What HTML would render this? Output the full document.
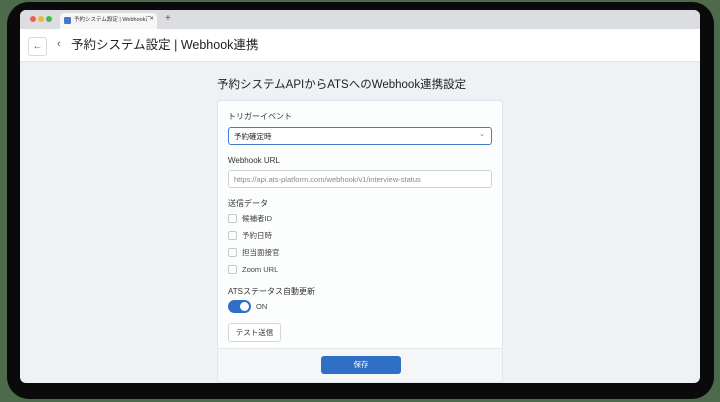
<!DOCTYPE html>
<html><head><meta charset="utf-8"><style>
*{box-sizing:border-box;margin:0;padding:0}
body{width:720px;height:402px;background:#4d6b4a;position:relative;overflow:hidden;font-family:"Liberation Sans","Noto Sans CJK JP",sans-serif;color:#222;line-height:1}
.frame{position:absolute;left:7px;top:2px;width:707px;height:397px;background:#0a0a0a;border-radius:22px}
.screen{position:absolute;left:20px;top:10px;width:680px;height:373px;background:#eef2f5;border-radius:6px;overflow:hidden}
.tabbar{position:absolute;left:0;top:0;width:680px;height:19px;background:#dcdde1}
.dot{position:absolute;top:6px;width:6px;height:6px;border-radius:50%}
.tab{position:absolute;left:40px;top:3px;width:97px;height:16px;background:#f6f6f7;border-radius:4px 4px 0 0;font-size:5.5px;color:#333;padding:5px 0 0 14px;white-space:nowrap;overflow:hidden}
.tab i{position:absolute;left:4px;top:4px;width:7px;height:7px;background:#4a78c8;border-radius:1px}
.hdr{position:absolute;left:0;top:19px;width:680px;height:33px;background:#fff;border-bottom:1px solid #e4e6ea}
.card{position:absolute;left:197px;top:90px;width:286px;height:283px;background:#fcfdfd;border:1px solid #e3e6ea;border-radius:4px;overflow:hidden}
.lbl{position:absolute;left:10px;font-size:8px;color:#333}
.inp{position:absolute;left:10px;width:264px;height:18px;border:1px solid #cfd3d8;border-radius:3px;background:#fff;font-size:7.5px;padding:5px 0 0 5px}
.cb{position:absolute;left:10px;width:9px;height:9px;border:1px solid #c4c8cd;border-radius:2px;background:#fff}
.ct{position:absolute;left:24px;font-size:7.5px;color:#444}
</style></head><body>
<div class="frame"></div>
<div class="screen">
 <div class="tabbar">
  <div class="dot" style="left:10px;background:#ec5f57"></div>
  <div class="dot" style="left:18px;background:#f1b93a"></div>
  <div class="dot" style="left:26px;background:#45b94a"></div>
  <div class="tab"><i></i>予約システム設定 | Webhook連<span style="position:absolute;right:3px;top:4px;background:#f6f6f7;padding-left:2px">✕</span></div>
  <div style="position:absolute;left:145px;top:4px;font-size:10px;color:#555">+</div>
 </div>
 <div class="hdr">
  <div style="position:absolute;left:8px;top:8px;width:19px;height:19px;border:1px solid #d6d9dd;border-radius:3px;font-size:10px;color:#555;text-align:center;line-height:17px">←</div>
  <div style="position:absolute;left:37px;top:10px;font-size:11px;color:#555">‹</div>
  <div style="position:absolute;left:51px;top:10px;font-size:12.5px;color:#222">予約システム設定 | Webhook連携</div>
 </div>
 <div style="position:absolute;left:197px;top:70px;font-size:11.5px;color:#222">予約システムAPIからATSへのWebhook連携設定</div>
 <div class="card">
  <div class="lbl" style="top:12px">トリガーイベント</div>
  <div class="inp" style="top:26px;border:1.5px solid #3f7bd0;color:#222">予約確定時<span style="position:absolute;right:6px;top:3px;color:#777;font-size:7px">⌄</span></div>
  <div class="lbl" style="top:56px">Webhook URL</div>
  <div class="inp" style="top:69px;color:#888">https://api.ats-platform.com/webhook/v1/interview-status</div>
  <div class="lbl" style="top:99px">送信データ</div>
  <div class="cb" style="top:113px"></div><div class="ct" style="top:114px">候補者ID</div>
  <div class="cb" style="top:130px"></div><div class="ct" style="top:131px">予約日時</div>
  <div class="cb" style="top:147px"></div><div class="ct" style="top:148px">担当面接官</div>
  <div class="cb" style="top:164px"></div><div class="ct" style="top:165px">Zoom URL</div>
  <div class="lbl" style="top:187px">ATSステータス自動更新</div>
  <div style="position:absolute;left:10px;top:199px;width:23px;height:13px;background:#2f6fc6;border-radius:7px"><div style="position:absolute;right:2px;top:2px;width:9px;height:9px;background:#fff;border-radius:50%"></div></div>
  <div class="ct" style="top:202px;left:38px">ON</div>
  <div style="position:absolute;left:10px;top:222px;width:53px;height:19px;border:1px solid #d3d6da;border-radius:3px;background:#fff;font-size:7.5px;text-align:center;line-height:17px;color:#333">テスト送信</div>
  <div style="position:absolute;left:0;top:247px;width:286px;height:40px;background:#f4f6f8;border-top:1px solid #e3e6ea">
   <div style="position:absolute;left:103px;top:7px;width:80px;height:18px;background:#2f6fc6;border-radius:3px;color:#fff;font-size:7.5px;text-align:center;line-height:18px">保存</div>
  </div>
 </div>
</div>
</body></html>
